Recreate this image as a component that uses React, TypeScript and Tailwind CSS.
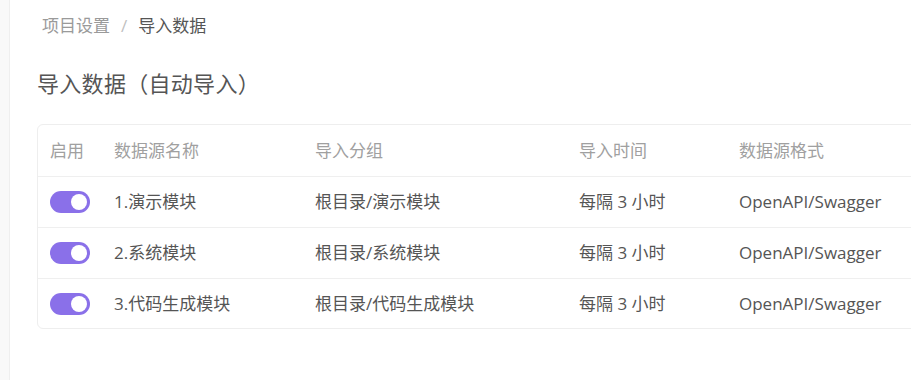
import React from 'react'

const rows = [
  { name: '1.演示模块', group: '根目录/演示模块' },
  { name: '2.系统模块', group: '根目录/系统模块' },
  { name: '3.代码生成模块', group: '根目录/代码生成模块' },
]

const Toggle: React.FC = () => (
  <div className="flex h-[22px] w-[40px] items-center justify-end rounded-full bg-[#8a70e9] pr-[3px]">
    <div className="h-[16px] w-[16px] rounded-full bg-white" />
  </div>
)

const cols = 'grid grid-cols-[64px_201px_264px_160px_1fr] items-center'

export default function App() {
  return (
    <div
      className="flex h-[380px] w-[911px] overflow-hidden bg-white text-[17px]"
      style={{ fontFamily: '"Open Sans", "Noto Sans CJK SC", sans-serif' }}
    >
      <div className="w-[10px] shrink-0 border-r border-[#efefef] bg-[#f9f9f9]" />
      <div className="min-w-0 flex-1 overflow-hidden pl-[27px]">
        <div className="flex h-[50px] items-center gap-[11px] pl-[5px] pt-[1px]">
          <span className="text-[#9a9a9a]">项目设置</span>
          <span className="text-[#c0c0c0]">/</span>
          <span className="text-[#555]">导入数据</span>
        </div>
        <h1 className="flex h-[68px] items-center pb-[2px] text-[22px] font-normal tracking-[0.3px] text-[#555]">
          导入数据（自动导入）
        </h1>
        <div className="mt-[6px] w-[960px] rounded-md border border-[#eeeeee]">
          <div className={`${cols} h-[52px] border-b border-[#efefef] text-[#a0a0a0]`}>
            <span className="pl-[12px]">启用</span>
            <span className="pl-[12px]">数据源名称</span>
            <span className="pl-[12px]">导入分组</span>
            <span className="pl-[12px]">导入时间</span>
            <span className="pl-[12px]">数据源格式</span>
          </div>
          {rows.map((r, i) => (
            <div
              key={r.name}
              className={`${cols} text-[#555] ${i < rows.length - 1 ? 'h-[51px] border-b border-[#efefef]' : 'h-[49px]'}`}
            >
              <div className="pl-[12px]">
                <Toggle />
              </div>
              <span className="pl-[12px]">{r.name}</span>
              <span className="pl-[12px]">{r.group}</span>
              <span className="pl-[12px]">每隔 3 小时</span>
              <span className="pl-[12px]">OpenAPI/Swagger</span>
            </div>
          ))}
        </div>
      </div>
    </div>
  )
}
